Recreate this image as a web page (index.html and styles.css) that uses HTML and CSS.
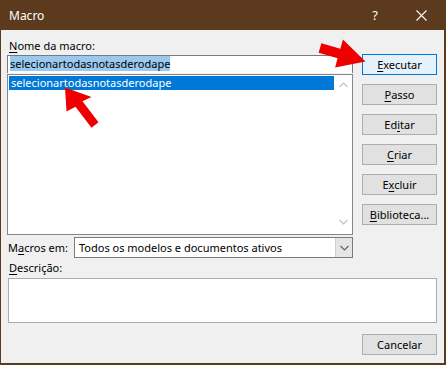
FILE: index.html
```html
<!DOCTYPE html>
<html lang="pt">
<head>
<meta charset="utf-8">
<title>Macro</title>
<link rel="stylesheet" href="styles.css">
</head>
<body>
<div class="window">
  <div class="titlebar">
    <span class="title">Macro</span>
    <span class="help">?</span>
    <span class="close"><svg width="11" height="11" viewBox="0 0 11 11"><path d="M0.5 0.5 L10.5 10.5 M10.5 0.5 L0.5 10.5" stroke="#fff" stroke-width="1.1" fill="none"/></svg></span>
  </div>
  <div class="content">
    <div class="top">
      <div class="left">
        <div class="lbl"><u>N</u>ome da macro:</div>
        <div class="namebox"><span class="sel">selecionartodasnotasderodape</span></div>
        <div class="listbox">
          <div class="items">
            <div class="item selected">selecionartodasnotasderodape</div>
          </div>
          <div class="scrollbar">
            <svg width="9" height="6" viewBox="0 0 9 6"><path d="M0.5 5 L4.5 1 L8.5 5" stroke="#c2c2c2" stroke-width="1.2" fill="none"/></svg>
            <svg width="9" height="6" viewBox="0 0 9 6"><path d="M0.5 1 L4.5 5 L8.5 1" stroke="#c2c2c2" stroke-width="1.2" fill="none"/></svg>
          </div>
        </div>
      </div>
      <div class="buttons">
        <button class="btn primary"><u>E</u>xecutar</button>
        <button class="btn"><u>P</u>asso</button>
        <button class="btn">Ed<u>i</u>tar</button>
        <button class="btn"><u>C</u>riar</button>
        <button class="btn">E<u>x</u>cluir</button>
        <button class="btn"><u>B</u>iblioteca...</button>
      </div>
    </div>
    <div class="macros-row">
      <div class="macros-lbl">M<u>a</u>cros em:</div>
      <div class="combo">
        <span class="combo-text">Todos os modelos e documentos ativos</span>
        <span class="drop"><svg width="9" height="6" viewBox="0 0 9 6"><path d="M0.5 1 L4.5 5 L8.5 1" stroke="#606060" stroke-width="1.1" fill="none"/></svg></span>
      </div>
    </div>
    <div class="lbl desc-lbl"><u>D</u>escrição:</div>
    <div class="desc"></div>
    <div class="footer">
      <button class="btn">Cancelar</button>
    </div>
  </div>
  <svg class="arrows" width="446" height="365" viewBox="0 0 446 365">
    <polygon fill="#ee0000" points="321.4,43.2 340.4,48.7 342.9,39.6 365.5,61.5 335.1,67.4 337.6,58.3 318.6,52.8"/>
    <polygon fill="#ee0000" points="65,87.5 91.5,97 82.5,101.2 98.5,122.2 91.5,127.8 75.5,106.8 66.5,111.5"/>
  </svg>
</div>
</body>
</html>
```

FILE: styles.css
```css
* { box-sizing: border-box; }
html, body { margin: 0; padding: 0; background: #f0f0f0; }
body {
  font-family: "Noto Sans", "Open Sans", sans-serif;
  font-size: 11px;
  color: #000;
}
.window {
  position: relative;
  width: 446px;
  height: 365px;
  background: #f0f0f0;
  border-left: 1px solid #5b3a1d;
  border-right: 2px solid #5b3a1d;
  border-bottom: 2px solid #5b3a1d;
  display: flex;
  flex-direction: column;
}
.titlebar {
  height: 30px;
  background: #5b3a1d;
  color: #fff;
  display: flex;
  align-items: center;
  padding-left: 8px;
  flex: none;
}
.title { flex: 1; font-size: 12px; }
.help { width: 44px; text-align: center; font-size: 13px; margin-right: 2px; }
.close { width: 44px; display: flex; justify-content: center; margin-right: 1px; }
.content {
  padding: 6px 7px 0 6px;
  display: flex;
  flex-direction: column;
}
.top { display: flex; gap: 9px; }
.left { width: 346px; display: flex; flex-direction: column; }
.lbl { height: 19px; line-height: 19px; padding-left: 2px; }
u { text-decoration: underline; text-underline-offset: 2px; text-decoration-thickness: 1px; }
.namebox {
  height: 18px;
  background: #fff;
  border: 1px solid #7a7a7a;
  border-bottom: none;
  padding-left: 2px;
  line-height: 16px;
}
.sel { background: #99c9ef; }
.listbox {
  margin-top: 1px;
  height: 161px;
  background: #fff;
  border: 1px solid #828790;
  display: flex;
}
.items { flex: 1; padding: 1px 1px; }
.item { height: 14px; line-height: 13px; padding-left: 2px; }
.item.selected { background: #0078d7; color: #fff; }
.scrollbar {
  width: 17px;
  display: flex;
  flex-direction: column;
  justify-content: space-between;
  align-items: center;
  padding: 7px 0 9px;
}
.buttons {
  width: 75px;
  margin-top: 18px;
  display: flex;
  flex-direction: column;
  gap: 9px;
}
.btn {
  font: inherit;
  color: #000;
  height: 21px;
  width: 75px;
  padding: 0;
  background: #e1e1e1;
  border: 1px solid #adadad;
  line-height: 18px;
}
.btn.primary { background: #e5f1fb; border-color: #0078d7; }
.macros-row { display: flex; margin-top: 2px; height: 21px; }
.macros-lbl { width: 67px; line-height: 21px; padding-left: 1px; }
.combo {
  width: 279px;
  background: #fff;
  border: 1px solid #7a7a7a;
  display: flex;
}
.combo-text { flex: 1; padding-left: 4px; line-height: 19px; }
.drop {
  width: 17px;
  background: #e5e5e5;
  border-left: 1px solid #cfcfcf;
  display: flex;
  align-items: center;
  justify-content: center;
}
.desc-lbl { height: 20px; line-height: 20px; }
.desc {
  height: 45px;
  background: #fff;
  border: 1px solid #abadb3;
  margin-left: 1px;
}
.footer { display: flex; justify-content: flex-end; margin-top: 11px; }
.arrows { position: absolute; left: -1px; top: 0; pointer-events: none; }
```
